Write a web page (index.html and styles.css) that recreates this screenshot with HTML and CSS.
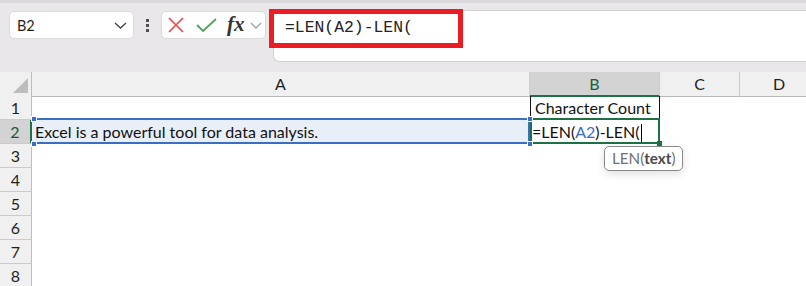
FILE: index.html
```html
<!DOCTYPE html>
<html lang="en">
<head>
    <meta charset="UTF-8">
    <meta name="viewport" content="width=device-width, initial-scale=1.0">
    <title>LEN formula</title>
    <link rel="stylesheet" href="styles.css">
</head>
<body>
<!-- Formula bar area -->
<div class="toolbar">
    <div class="name-box">
        <span>B2</span>
        <svg width="13" height="7" viewBox="0 0 13 7"><path d="M1 1 L6.5 6 L12 1" fill="none" stroke="#444" stroke-width="1.3"/></svg>
    </div>
    <div class="dots"><i></i><i></i><i></i></div>
    <div class="edit-box">
        <svg class="icon-cancel" width="16" height="16" viewBox="0 0 16 16"><path d="M1 1 L15 15 M15 1 L1 15" stroke="#e84a4f" stroke-width="1.7" fill="none"/></svg>
        <svg class="icon-enter" width="21" height="14" viewBox="0 0 21 14"><path d="M1 7 L7 13 L20 1" stroke="#4fa25e" stroke-width="1.8" fill="none"/></svg>
        <span class="fx">fx</span>
        <svg class="icon-more" width="12" height="7" viewBox="0 0 12 7"><path d="M1 1 L6 6 L11 1" fill="none" stroke="#a0a0a0" stroke-width="1.3"/></svg>
    </div>
    <div class="formula-bar">
        =LEN(A2)-LEN(
        <div class="mark"></div>
    </div>
</div>

<!-- Sheet grid -->
<div class="sheet">
    <div class="row head-row">
        <div class="corner"><svg width="32" height="24" viewBox="0 0 32 24"><polygon points="28,6 28,21 13,21" fill="#bdbdbd"/></svg></div>
        <div class="col-head">A</div>
        <div class="col-head selected">B</div>
        <div class="col-head">C</div>
        <div class="col-head last">D</div>
    </div>
    <div class="row">
        <div class="row-head">1</div>
        <div class="cell"></div>
        <div class="cell boxed">Character Count</div>
        <div class="cell"></div>
        <div class="cell"></div>
    </div>
    <div class="row">
        <div class="row-head selected">2</div>
        <div class="cell ref-range">Excel is a powerful tool for data analysis.
            <span class="handle tl"></span><span class="handle bl"></span>
            <span class="handle tr"></span><span class="handle br"></span>
        </div>
        <div class="cell active">=LEN(<span class="ref">A2</span>)-LEN(<span class="caret"></span>
            <span class="fill-handle"></span>
            <div class="tip">LEN(<b>text</b>)</div>
        </div>
        <div class="cell"></div>
        <div class="cell"></div>
    </div>
    <div class="row"><div class="row-head">3</div></div>
    <div class="row"><div class="row-head">4</div></div>
    <div class="row"><div class="row-head">5</div></div>
    <div class="row"><div class="row-head">6</div></div>
    <div class="row"><div class="row-head">7</div></div>
    <div class="row"><div class="row-head">8</div></div>
</div>
</body>
</html>
```
FILE: styles.css
```css
body {
    margin: 0;
    width: 806px;
    height: 286px;
    overflow: hidden;
    background: #fff;
    font-family: Lato, "Liberation Sans", sans-serif;
    color: #1f1f1f;
}
.toolbar {
    display: flex;
    align-items: flex-start;
    background: #eae7ea;
    border-top: 3px solid #dbd8db;
    padding: 7px 0 10px 9px;
}
.name-box {
    box-sizing: border-box;
    width: 125px;
    height: 28px;
    margin-top: 1px;
    padding: 0 6px 0 7px;
    display: flex;
    align-items: center;
    justify-content: space-between;
    background: #fff;
    border: 1px solid #dcdadc;
    border-radius: 5px;
    font-size: 14.5px;
}
.dots {
    width: 27px;
    height: 28px;
    margin-top: 1px;
    display: flex;
    flex-direction: column;
    align-items: center;
    justify-content: center;
    gap: 2px;
}
.dots i {
    width: 3px;
    height: 3px;
    background: #505050;
}
.edit-box {
    box-sizing: border-box;
    width: 105px;
    height: 28px;
    margin-top: 1px;
    display: flex;
    align-items: center;
    background: #fff;
    border: 1px solid #dcdadc;
    border-radius: 5px;
}
.icon-cancel {
    margin-left: 6px;
}
.icon-enter {
    margin-left: 12px;
}
.fx {
    margin-left: 10px;
    margin-top: -3px;
    font-family: "Liberation Serif", serif;
    font-style: italic;
    font-weight: bold;
    font-size: 21px;
    line-height: 20px;
    color: #333;
}
.icon-more {
    margin-left: 5px;
}
.formula-bar {
    position: relative;
    box-sizing: border-box;
    flex: 1;
    height: 52px;
    margin-left: 7px;
    padding: 7px 0 0 11px;
    background: #fff;
    border: 1px solid #d2d0d2;
    border-right: none;
    border-radius: 6px 0 0 6px;
    font-family: "Liberation Mono", monospace;
    font-size: 16.4px;
    line-height: 20px;
    color: #222;
}
/* red highlight drawn over the formula */
.mark {
    position: absolute;
    left: -5px;
    top: -2px;
    box-sizing: border-box;
    width: 194px;
    height: 39px;
    border: 5px solid #ec1c24;
}
.row {
    display: grid;
    grid-template-columns: 32px 498px 130px 80px 78px;
    height: 24px;
}
.head-row {
    background: #f0f0f0;
}
.corner {
    box-sizing: border-box;
    border-right: 1px solid #bdbdbd;
    border-bottom: 1px solid #b8b8b8;
}
.corner svg {
    display: block;
}
.col-head {
    box-sizing: border-box;
    border-right: 1px solid #cdcdcd;
    border-bottom: 1px solid #b8b8b8;
    text-align: center;
    font-size: 16px;
    line-height: 23px;
}
.col-head.last {
    border-right: none;
}
.col-head.selected {
    background: #d3d3d3;
    color: #185c37;
    border-bottom: 2px solid #1e7145;
}
.row-head {
    box-sizing: border-box;
    background: #f0f0f0;
    border-right: 1px solid #bdbdbd;
    border-bottom: 1px solid #cbcbcb;
    text-align: center;
    font-size: 16px;
    line-height: 23px;
}
.row-head.selected {
    background: #d3d3d3;
    color: #185c37;
    border-right: 2px solid #1e7145;
}
.cell {
    position: relative;
    box-sizing: border-box;
    padding-left: 3px;
    font-size: 16px;
    line-height: 23px;
    white-space: nowrap;
    color: #111;
}
.cell.boxed {
    border-left: 1px solid #111;
    border-right: 1px solid #111;
    padding-left: 4px;
}
.ref-range {
    background: #e9eff8;
}
.ref-range::after {
    content: "";
    position: absolute;
    left: 0;
    right: 0;
    top: -2px;
    bottom: 0;
    border: 2px solid #3a6dc6;
    border-left: none;
}
.handle {
    position: absolute;
    width: 4px;
    height: 4px;
    background: #3a6dc6;
    border: 1px solid #fff;
    z-index: 1;
}
.handle.tl { left: -1px; top: -4px; }
.handle.bl { left: -1px; bottom: -3px; }
.handle.tr { right: -3px; top: -4px; }
.handle.br { right: -3px; bottom: -3px; }
.active {
    padding-left: 2px;
}
.active::after {
    content: "";
    position: absolute;
    left: 0;
    right: 0;
    top: -2px;
    bottom: 0;
    border: 2px solid #1e7145;
}
.ref {
    color: #3a6dc6;
}
.caret {
    display: inline-block;
    width: 1px;
    height: 18px;
    margin-left: 1px;
    background: #000;
    vertical-align: -4px;
}
.fill-handle {
    position: absolute;
    right: -2px;
    bottom: -2px;
    width: 5px;
    height: 5px;
    background: #1e7145;
    z-index: 1;
}
.tip {
    position: absolute;
    left: 74px;
    top: 26px;
    box-sizing: border-box;
    height: 25px;
    padding: 0 7px;
    background: #fff;
    border: 1px solid #8a8a8a;
    border-radius: 5px;
    box-shadow: 0 3px 8px rgba(0, 0, 0, 0.12);
    font-size: 15.2px;
    line-height: 23px;
    color: #707070;
    z-index: 2;
}
.tip b {
    color: #4a4a4a;
}
```
